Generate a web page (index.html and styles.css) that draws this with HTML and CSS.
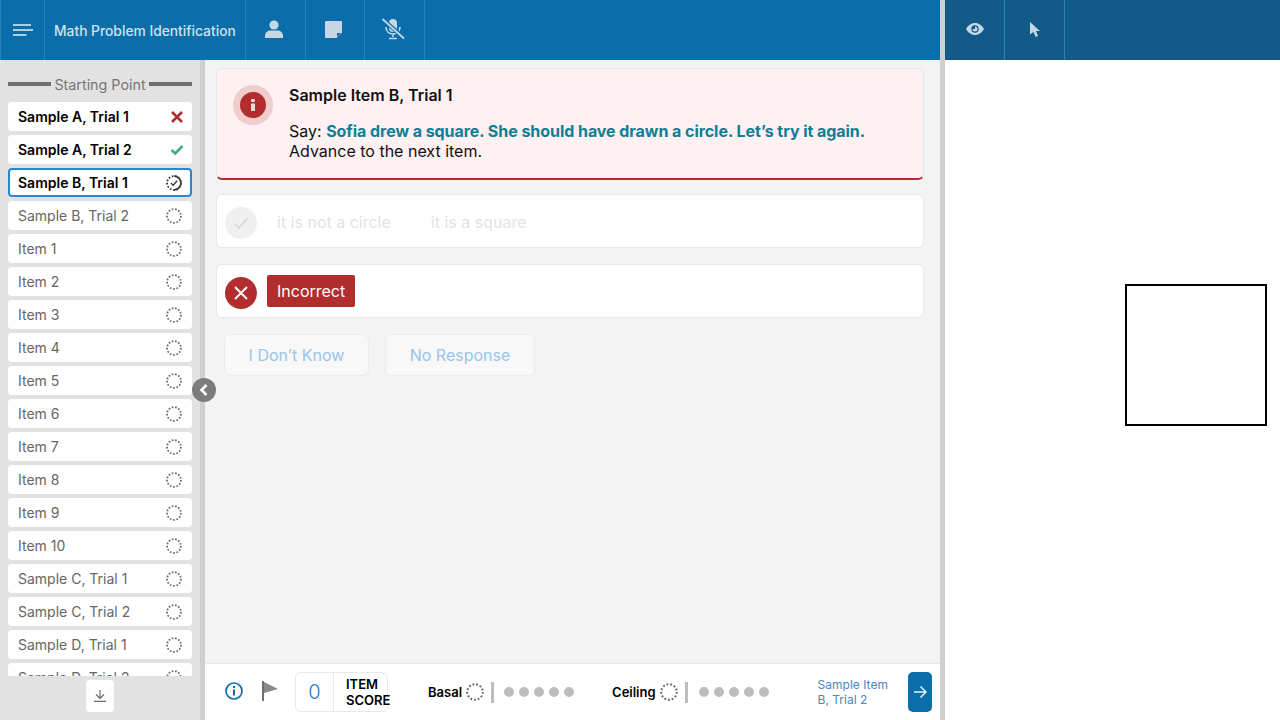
FILE: index.html
```html
<!DOCTYPE html>
<html lang="en">
<head>
    <meta charset="UTF-8">
    <title>Math Problem Identification</title>
    <link rel="stylesheet" href="styles.css">
</head>
<body>
    <svg class="defs" width="0" height="0">
        <symbol id="dots" viewBox="0 0 18 18">
            <circle cx="9" cy="9" r="7.800" fill="none" stroke="#6a6a6a" stroke-width="2" stroke-dasharray="1.900 1.870"/>
        </symbol>
    </svg>

    <div class="app">
        <div class="left-pane">
            <header class="topbar">
                <div class="cell menu-cell">
                    <svg width="20" height="12" viewBox="0 0 20 12"><path d="M0 1h18M0 6h20M0 11h13.500" stroke="#e2edf5" stroke-width="1.600" fill="none"/></svg>
                </div>
                <div class="cell title-cell">Math Problem Identification</div>
                <div class="cell icon-cell">
                    <svg width="18" height="18" viewBox="0 0 18 18"><circle cx="9" cy="5" r="4.600" fill="#c5d6e5"/><path d="M0 18v-2.500c0-3 2.800-5 5.500-5h7c2.700 0 5.500 2 5.500 5V18z" fill="#c5d6e5"/></svg>
                </div>
                <div class="cell icon-cell">
                    <svg width="17" height="17" viewBox="0 0 17 17"><path d="M1 0h15a1 1 0 0 1 1 1v10.500L11.500 17H1a1 1 0 0 1-1-1V1a1 1 0 0 1 1-1z" fill="#c5d6e5"/><path d="M12 16v-4h4z" fill="#0a6eaa"/></svg>
                </div>
                <div class="cell icon-cell">
                    <svg width="24" height="22" viewBox="0 0 24 22"><rect x="8" y="1" width="8" height="13" rx="4" fill="#c5d6e5"/><path d="M5 9c0 4.500 3 7 7 7s7-2.500 7-7M12 16v3M8 20.500h8" stroke="#c5d6e5" stroke-width="1.600" fill="none"/><path d="M2 1.500 23 20" stroke="#0a6eaa" stroke-width="4"/><path d="M1.500 1 23 20.500" stroke="#c5d6e5" stroke-width="1.800"/></svg>
                </div>
            </header>

            <div class="workspace">
                <aside class="sidebar">
                    <div class="start-label"><span class="rule"></span>Starting Point<span class="rule"></span></div>
                    <ul class="item-list">
                        <li class="item done">Sample A, Trial 1
                            <svg class="state" width="16" height="16" viewBox="0 0 16 16"><path d="M3 3l10 10M13 3 3 13" stroke="#b22d2d" stroke-width="2.600"/></svg>
                        </li>
                        <li class="item done">Sample A, Trial 2
                            <svg class="state" width="16" height="16" viewBox="0 0 16 16"><path d="M2.500 8l3.800 3.500 7.200-7.500" stroke="#3fae7c" stroke-width="2.600" fill="none"/></svg>
                        </li>
                        <li class="item done current">Sample B, Trial 1
                            <svg width="16" height="16" viewBox="0 0 18 18"><circle cx="9" cy="9" r="7.800" fill="none" stroke="#333" stroke-width="2" stroke-dasharray="1.900 1.870"/><path d="M9 1.200a7.800 7.800 0 0 1 0 15.600" fill="none" stroke="#333" stroke-width="1.800"/><path d="M5.500 9l2.500 2.500 4.500-5" fill="none" stroke="#333" stroke-width="1.400"/></svg>
                        </li>
                        <li class="item">Sample B, Trial 2 <svg class="dots"><use href="#dots"/></svg></li>
                        <li class="item">Item 1 <svg class="dots"><use href="#dots"/></svg></li>
                        <li class="item">Item 2 <svg class="dots"><use href="#dots"/></svg></li>
                        <li class="item">Item 3 <svg class="dots"><use href="#dots"/></svg></li>
                        <li class="item">Item 4 <svg class="dots"><use href="#dots"/></svg></li>
                        <li class="item">Item 5 <svg class="dots"><use href="#dots"/></svg></li>
                        <li class="item">Item 6 <svg class="dots"><use href="#dots"/></svg></li>
                        <li class="item">Item 7 <svg class="dots"><use href="#dots"/></svg></li>
                        <li class="item">Item 8 <svg class="dots"><use href="#dots"/></svg></li>
                        <li class="item">Item 9 <svg class="dots"><use href="#dots"/></svg></li>
                        <li class="item">Item 10 <svg class="dots"><use href="#dots"/></svg></li>
                        <li class="item">Sample C, Trial 1 <svg class="dots"><use href="#dots"/></svg></li>
                        <li class="item">Sample C, Trial 2 <svg class="dots"><use href="#dots"/></svg></li>
                        <li class="item">Sample D, Trial 1 <svg class="dots"><use href="#dots"/></svg></li>
                        <li class="item">Sample D, Trial 2 <svg class="dots"><use href="#dots"/></svg></li>
                    </ul>
                    <div class="sidebar-foot">
                        <button class="down-btn">
                            <svg width="12" height="12" viewBox="0 0 12 12"><path d="M6 0v8.500M2 4.500 6 8.500l4-4M0 11.300h12" stroke="#6b6b6b" stroke-width="1.200" fill="none"/></svg>
                        </button>
                    </div>
                </aside>

                <button class="collapse-btn">
                    <svg width="10" height="12" viewBox="0 0 10 12"><path d="M7.500 1 2.500 6l5 5" stroke="#fff" stroke-width="2.600" fill="none"/></svg>
                </button>

                <main class="main">
                    <div class="content">
                        <section class="alert">
                            <div class="alert-ring">
                                <div class="alert-dot">
                                    <svg width="4" height="12" viewBox="0 0 4 12"><rect width="4" height="3" rx="1" fill="#f4d6d6"/><rect y="4.500" width="4" height="7.500" fill="#f4d6d6"/></svg>
                                </div>
                            </div>
                            <div class="alert-body">
                                <h2>Sample Item B, Trial 1</h2>
                                <p>Say: <b>Sofia drew a square. She should have drawn a circle. Let’s try it again.</b><br>Advance to the next item.</p>
                            </div>
                        </section>

                        <section class="answer faded">
                            <span class="mark mark-off">
                                <svg width="16" height="14" viewBox="0 0 16 14"><path d="M1.500 7.500l4.500 4.500 8.500-10" stroke="#dcdcdc" stroke-width="2" fill="none"/></svg>
                            </span>
                            <span class="choice">it is not a circle</span>
                            <span class="choice">it is a square</span>
                        </section>

                        <section class="answer">
                            <span class="mark mark-wrong">
                                <svg width="14" height="14" viewBox="0 0 14 14"><path d="M1 1l12 12M13 1 1 13" stroke="#fff" stroke-width="1.900"/></svg>
                            </span>
                            <span class="tag">Incorrect</span>
                        </section>

                        <div class="actions">
                            <button class="soft-btn idk">I Don’t Know</button>
                            <button class="soft-btn nr">No Response</button>
                        </div>
                    </div>

                    <footer class="bottombar">
                        <svg class="info" width="18" height="18" viewBox="0 0 18 18"><circle cx="9" cy="9" r="8" fill="none" stroke="#0a6eaa" stroke-width="1.700"/><rect x="8" y="4" width="2" height="2" fill="#0a6eaa"/><rect x="8" y="7.500" width="2" height="6" fill="#0a6eaa"/></svg>
                        <svg class="flag" width="16" height="20" viewBox="0 0 16 20"><path d="M0 0h2v20H0z" fill="#6f6f6f"/><path d="M2 1l14 7-14 4z" fill="#8a8a8a"/></svg>
                        <div class="score">
                            <span class="score-val">0</span>
                            <span class="score-lbl">ITEM SCORE</span>
                        </div>
                        <div class="track basal">
                            <span class="track-name">Basal</span>
                            <svg class="dots-lg"><use href="#dots"/></svg>
                            <span class="bar"></span>
                            <span class="pips"><i></i><i></i><i></i><i></i><i></i></span>
                        </div>
                        <div class="track ceiling">
                            <span class="track-name">Ceiling</span>
                            <svg class="dots-lg"><use href="#dots"/></svg>
                            <span class="bar"></span>
                            <span class="pips"><i></i><i></i><i></i><i></i><i></i></span>
                        </div>
                        <span class="next-label">Sample Item B, Trial 2</span>
                        <button class="next-btn">
                            <svg width="14" height="14" viewBox="0 0 14 14"><path d="M1 7h12M7.500 1.500 13 7l-5.500 5.500" stroke="#e6eff6" stroke-width="1.500" fill="none"/></svg>
                        </button>
                    </footer>
                </main>
            </div>
        </div>

        <div class="right-pane">
            <header class="topbar dark">
                <div class="cell icon-cell">
                    <svg width="18" height="12" viewBox="0 0 18 12"><path d="M0 6c2-3.500 5.200-6 9-6s7 2.500 9 6c-2 3.500-5.200 6-9 6S2 9.500 0 6z" fill="#c5d6e5"/><circle cx="9" cy="6" r="3.700" fill="#125a87"/><path d="M9 3.500A2.500 2.500 0 1 1 6.500 6H9z" fill="#c5d6e5"/></svg>
                </div>
                <div class="cell icon-cell">
                    <svg width="10" height="15" viewBox="0 0 10 15"><path d="M0 0l10 9H6l2 5-2.500 1-2-5L0 12.500z" fill="#c5d6e5"/></svg>
                </div>
            </header>
            <div class="canvas">
                <div class="shape-square"></div>
            </div>
        </div>
    </div>
</body>
</html>
```

FILE: styles.css
```css
* {
    box-sizing: border-box;
}

body {
    margin: 0;
    font-family: Inter, "Noto Sans", sans-serif;
    overflow: hidden;
    background: #fff;
}

button {
    font-family: inherit;
    padding: 0;
}

.defs {
    position: absolute;
}

.app {
    display: flex;
    width: 1280px;
    height: 720px;
}

.left-pane {
    width: 945px;
    display: flex;
    flex-direction: column;
    border-right: 5px solid #cfcfcf;
}

.right-pane {
    flex: 1;
    display: flex;
    flex-direction: column;
}

/* top bars */
.topbar {
    display: flex;
    height: 60px;
    flex-shrink: 0;
    background: #0a6eaa;
}

.topbar.dark {
    background: #125a87;
}

.cell {
    display: flex;
    align-items: center;
    justify-content: center;
    height: 60px;
    border-right: 1px solid #2a81b8;
}

.menu-cell {
    width: 45px;
    border-left: 1px solid #2a81b8;
}

.title-cell {
    width: 201px;
    justify-content: flex-start;
    padding-left: 9px;
    padding-top: 2px;
    color: #cfe0ee;
    font-size: 13.800px;
    font-weight: 500;
    white-space: nowrap;
}

.icon-cell {
    width: 59.500px;
    padding-bottom: 2px;
    padding-right: 2px;
}

.dark .icon-cell {
    width: 60px;
    padding-right: 0;
}

.workspace {
    flex: 1;
    display: flex;
    position: relative;
    min-height: 0;
}

/* left item list */
.sidebar {
    width: 205px;
    background: #e2e2e2;
    border-right: 5px solid #cfcfcf;
    display: flex;
    flex-direction: column;
    padding-top: 15px;
    flex-shrink: 0;
}

.start-label {
    display: flex;
    align-items: center;
    justify-content: space-between;
    height: 18px;
    padding: 0 8px;
    font-size: 14.300px;
    color: #767676;
    white-space: nowrap;
}

.rule {
    width: 43px;
    height: 4px;
    background: #6f716f;
}

.item-list {
    list-style: none;
    margin: 9px 0 0;
    padding: 0 8px;
    flex: 1;
    overflow: hidden;
    display: flex;
    flex-direction: column;
    gap: 4px;
}

.item {
    flex-shrink: 0;
    display: flex;
    align-items: center;
    justify-content: space-between;
    height: 29px;
    padding: 0 10px;
    background: #fff;
    border-radius: 4px;
    font-size: 14px;
    color: #666;
}

.item.done {
    color: #000;
    font-weight: 600;
}

.item.current {
    border: 2px solid #2a86d1;
    padding: 0 8px;
}

.state {
    margin-right: -3px;
}

.dots {
    width: 16px;
    height: 16px;
}

.sidebar-foot {
    height: 44px;
    flex-shrink: 0;
    display: flex;
    justify-content: center;
    padding-top: 4px;
}

.down-btn {
    width: 28px;
    height: 32px;
    border: none;
    border-radius: 4px;
    background: #fff;
    display: flex;
    align-items: center;
    justify-content: center;
}

.collapse-btn {
    position: absolute;
    left: 192px;
    top: 318px;
    width: 24px;
    height: 24px;
    border: none;
    border-radius: 50%;
    background: #7b7d7d;
    display: flex;
    align-items: center;
    justify-content: center;
}

/* main column */
.main {
    flex: 1;
    display: flex;
    flex-direction: column;
    background: #f3f3f4;
    min-width: 0;
}

.content {
    flex: 1;
    padding: 8px 16px 0 11px;
}

.alert {
    display: flex;
    height: 112px;
    margin-bottom: -2px;
    padding: 16px 16px 0;
    background: #fff0f1;
    border: 1px solid #e4e8f0;
    border-bottom: 2px solid #b22d2d;
    border-radius: 6px;
}

.alert-ring {
    width: 40px;
    height: 40px;
    border-radius: 50%;
    background: #f0cccd;
    display: flex;
    align-items: center;
    justify-content: center;
    flex-shrink: 0;
}

.alert-dot {
    width: 26px;
    height: 26px;
    border-radius: 50%;
    background: #b22d2d;
    display: flex;
    align-items: center;
    justify-content: center;
}

.alert-body {
    margin-left: 16px;
    color: #111;
}

.alert-body h2 {
    margin: 0;
    font-size: 16px;
    font-weight: 600;
    line-height: 20px;
}

.alert-body p {
    margin: 16px 0 0;
    font-size: 16px;
    line-height: 20px;
}

.alert-body b {
    color: #0b8095;
    font-weight: 700;
    letter-spacing: -0.050px;
}

.answer {
    display: flex;
    align-items: center;
    height: 54px;
    margin-top: 16px;
    padding: 0 8px;
    background: #fff;
    border: 1px solid #e6e7f0;
    border-radius: 6px;
}

.mark {
    width: 32px;
    height: 32px;
    margin-top: 4px;
    border-radius: 50%;
    display: flex;
    align-items: center;
    justify-content: center;
    flex-shrink: 0;
}

.mark-off {
    background: #f0f0f0;
}

.mark-wrong {
    background: #b22d2d;
}

.choice {
    margin-left: 20px;
    margin-right: 20px;
    padding-top: 2px;
    font-size: 16px;
    color: #e3e3e3;
}

.tag {
    margin-left: 10px;
    padding: 0 10px;
    height: 32px;
    line-height: 32px;
    background: #b22d2d;
    border-radius: 2px;
    color: #fff;
    font-size: 16px;
}

.actions {
    display: flex;
    gap: 16px;
    margin: 16px 0 0 8px;
}

.soft-btn {
    height: 42px;
    background: #f8f8f9;
    border: 1px solid #ececf0;
    border-radius: 6px;
    color: #98c5e8;
    font-size: 16px;
}

.idk {
    width: 145px;
}

.nr {
    width: 150px;
}

/* bottom bar */
.bottombar {
    height: 57px;
    flex-shrink: 0;
    display: flex;
    align-items: center;
    background: #fff;
    border-top: 1px solid #e6e6e6;
    padding-left: 20px;
}

.info {
    margin-right: 19px;
    margin-top: -2px;
}

.flag {
    margin-right: 17px;
    margin-top: -2px;
}

.score {
    display: flex;
    width: 93px;
    height: 40px;
    border: 1px solid #e6e8f2;
    border-radius: 6px;
}

.score-val {
    width: 38px;
    border-right: 1px solid #e6e8f2;
    text-align: center;
    line-height: 38px;
    font-size: 20px;
    font-weight: 300;
    color: #2a7cc0;
}

.score-lbl {
    width: 45px;
    padding-left: 12px;
    font-size: 13px;
    font-weight: 600;
    line-height: 15.500px;
    padding-top: 4px;
    color: #000;
}

.track {
    display: flex;
    align-items: center;
}

.basal {
    margin-left: 40px;
}

.ceiling {
    margin-left: 38px;
}

.track-name {
    font-size: 13px;
    font-weight: 600;
    color: #000;
    margin-right: 4px;
}

.dots-lg {
    width: 18px;
    height: 18px;
}

.bar {
    width: 3px;
    height: 21px;
    margin: 0 10px 0 7px;
    background: #bdbdbd;
}

.ceiling .bar {
    margin-right: 11px;
}

.pips {
    display: flex;
    gap: 5px;
}

.pips i {
    width: 10px;
    height: 10px;
    border-radius: 50%;
    background: #bdbdbd;
}

.next-label {
    width: 80px;
    margin-left: 49px;
    font-size: 12px;
    line-height: 15px;
    color: #4a86c0;
}

.next-btn {
    width: 24px;
    height: 40px;
    margin-left: 10px;
    border: none;
    border-radius: 5px;
    background: #0a6eaa;
    display: flex;
    align-items: center;
    justify-content: center;
}

/* right canvas */
.canvas {
    flex: 1;
    display: flex;
    justify-content: flex-end;
    padding: 224px 13px 0 0;
}

.shape-square {
    width: 142px;
    height: 142px;
    border: 2px solid #000;
}
```
